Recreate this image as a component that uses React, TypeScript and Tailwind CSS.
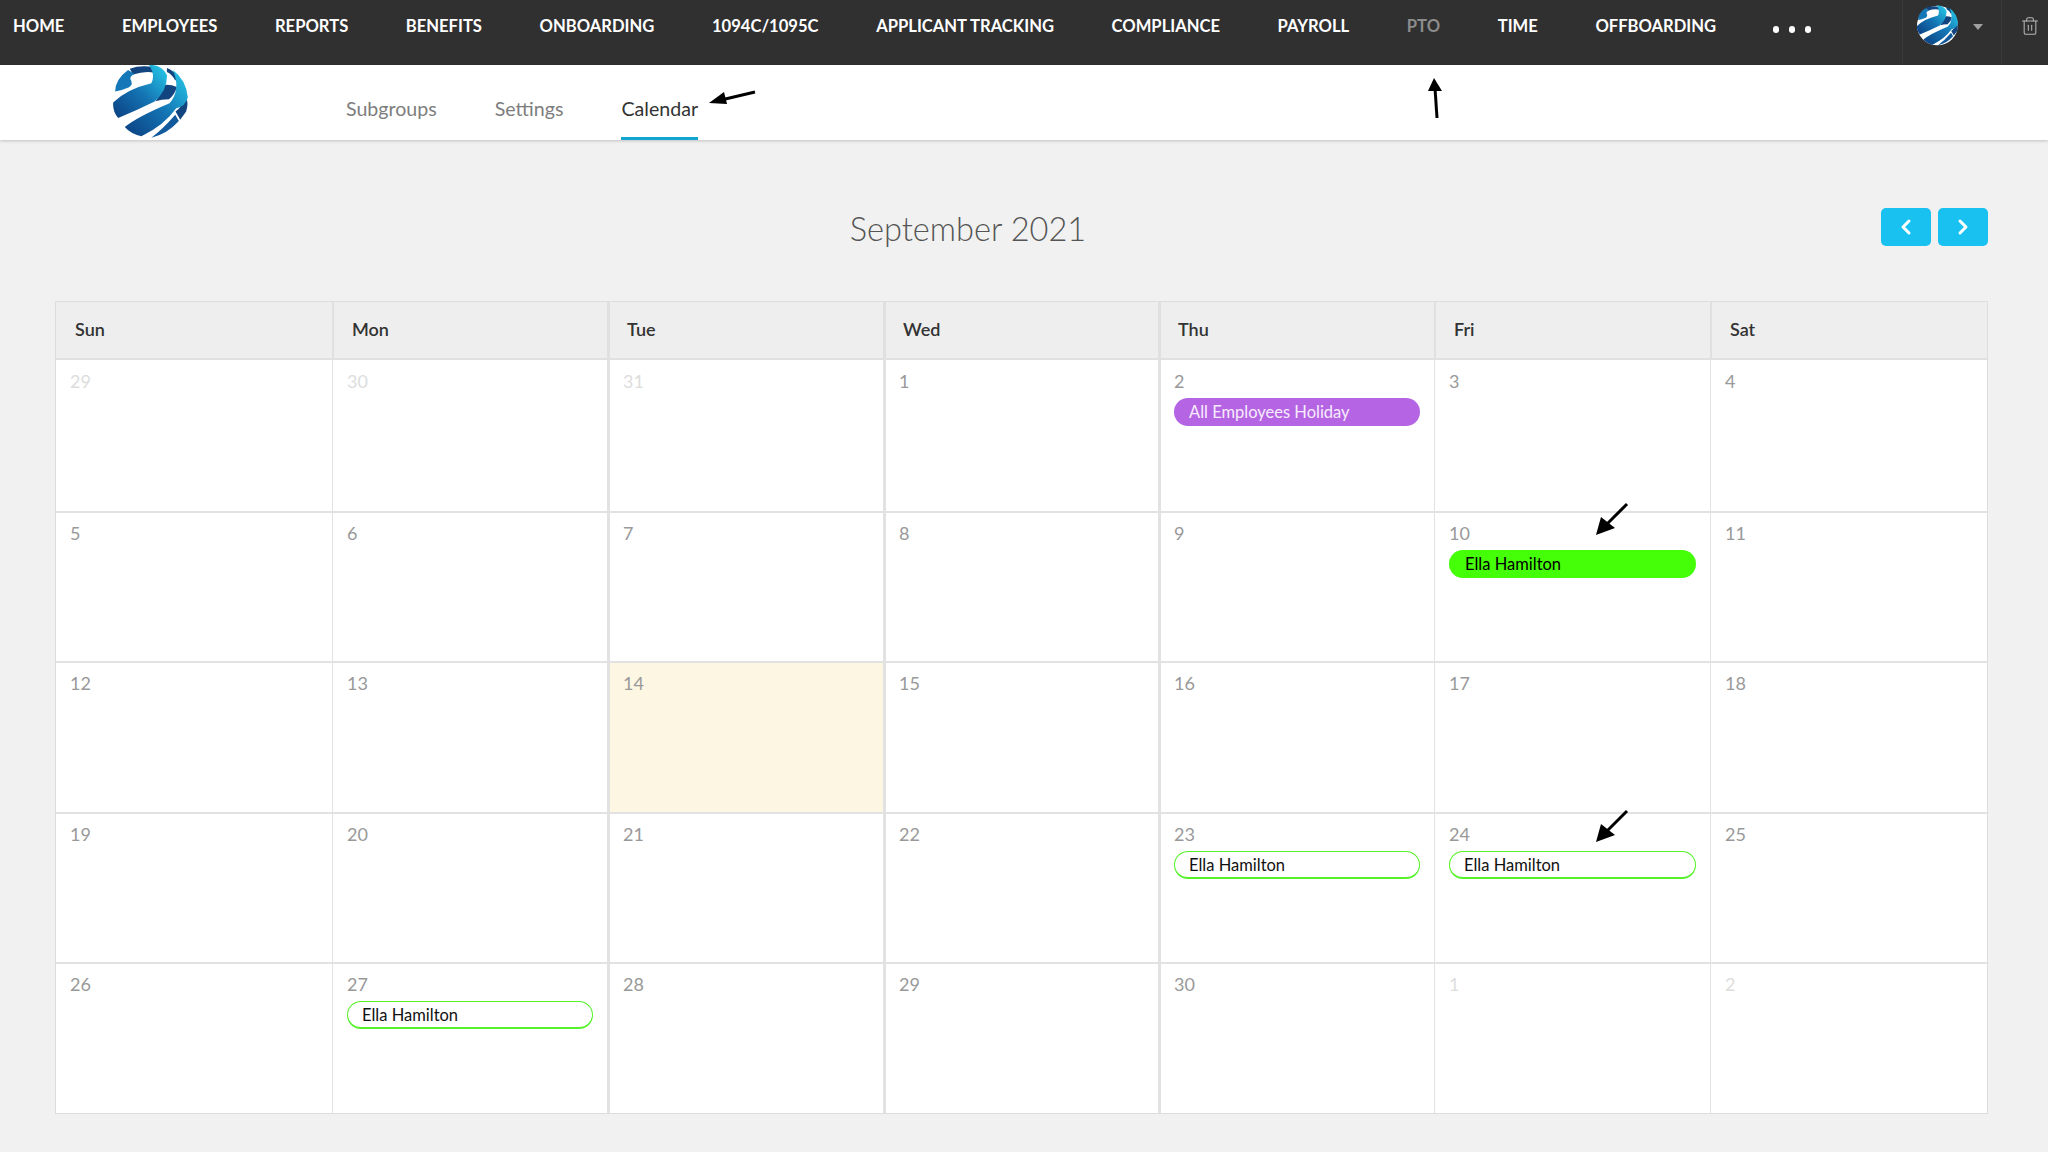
import { useId } from 'react';
import { ChevronLeft, ChevronRight, Trash2 } from 'lucide-react';

const NAV = ['HOME', 'EMPLOYEES', 'REPORTS', 'BENEFITS', 'ONBOARDING', '1094C/1095C', 'APPLICANT TRACKING', 'COMPLIANCE', 'PAYROLL', 'PTO', 'TIME', 'OFFBOARDING'];
const DAYS = ['Sun', 'Mon', 'Tue', 'Wed', 'Thu', 'Fri', 'Sat'];

type Cell = { n: number; muted?: boolean; today?: boolean; pill?: 'holiday' | 'solid' | 'outline' };

const CELLS: Cell[] = [
  { n: 29, muted: true }, { n: 30, muted: true }, { n: 31, muted: true }, { n: 1 }, { n: 2, pill: 'holiday' }, { n: 3 }, { n: 4 },
  { n: 5 }, { n: 6 }, { n: 7 }, { n: 8 }, { n: 9 }, { n: 10, pill: 'solid' }, { n: 11 },
  { n: 12 }, { n: 13 }, { n: 14, today: true }, { n: 15 }, { n: 16 }, { n: 17 }, { n: 18 },
  { n: 19 }, { n: 20 }, { n: 21 }, { n: 22 }, { n: 23, pill: 'outline' }, { n: 24, pill: 'outline' }, { n: 25 },
  { n: 26 }, { n: 27, pill: 'outline' }, { n: 28 }, { n: 29 }, { n: 30 }, { n: 1, muted: true }, { n: 2, muted: true },
];

function Globe({ className, ring }: { className: string; ring?: boolean }) {
  const id = useId();
  return (
    <svg viewBox="100 75 225 220" className={className}>
      <defs>
        <linearGradient id={id} x1="0" y1="1" x2="1" y2="0">
          <stop offset="0" stopColor="#0b3f80" />
          <stop offset="0.5" stopColor="#1474b4" />
          <stop offset="1" stopColor="#27cdea" />
        </linearGradient>
      </defs>
      <ellipse cx="212" cy="185" rx="112" ry="109" fill={ring ? '#ffffff' : 'none'} />
      <path d="M250 135 Q272 132 292 141 Q285 165 268 178 Q245 178 228 184 Q245 160 250 135Z" fill="#12457f" />
      <path d="M262 84 Q282 92 298 112 L287 122 Q277 102 262 96Z" fill="#12457f" />
      <path d="M320 172 Q328 190 320 215 L302 240 L288 215 Q308 200 320 172Z" fill="#12457f" />
      <path d="M215 294 Q262 284 298 244 L287 225 Q250 268 215 294Z" fill="#125a9c" />
      <path d="M150 86 Q185 74 222 82 L224 98 Q195 92 160 104Z" fill="#12457f" />
      <path d="M106 155 Q106 118 145 90 L165 102 Q150 108 152 118 Q162 132 148 142 Q125 152 106 155Z" fill="#1478b8" />
      <path d="M100 188 Q140 148 215 130 Q228 105 208 75 Q245 72 262 105 Q264 150 225 185 Q170 212 115 235 Q98 215 100 188Z" fill={`url(#${id})`} />
      <path d="M135 262 Q170 232 270 190 Q305 150 280 90 Q320 120 325 172 Q318 200 290 205 Q255 255 185 290 Q152 282 135 262Z" fill={`url(#${id})`} />
    </svg>
  );
}

// annotation arrow drawn over the page, tail to tip
function Arrow({ className, d, head }: { className: string; d: string; head: string }) {
  return (
    <svg viewBox="0 0 50 50" className={`absolute ${className}`}>
      <path d={d} stroke="#000" strokeWidth="3" fill="none" />
      <polygon points={head} fill="#000" />
    </svg>
  );
}

function Pill({ kind }: { kind: NonNullable<Cell['pill']> }) {
  if (kind === 'holiday') {
    return <div className="h-[28px] rounded-[14px] bg-[#b565e3] pl-[15px] text-[16.5px] leading-[29px] text-[#f7ecfd]">All Employees Holiday</div>;
  }
  if (kind === 'solid') {
    return <div className="h-[28px] rounded-[14px] bg-[#44ff08] pl-[16px] text-[16.5px] leading-[28px] text-black">Ella Hamilton</div>;
  }
  return <div className="h-[28px] rounded-[14px] border border-b-2 border-[#55f22a] bg-white pl-[14px] text-[16.5px] leading-[26px] text-[#111]">Ella Hamilton</div>;
}

export default function App() {
  return (
    <div className="relative min-h-screen overflow-hidden bg-[#f1f1f1] font-['Lato',sans-serif]">
      <nav className="flex h-[65px] items-start bg-[#303030] text-white">
        <ul className="flex gap-[57.6px] pl-[13px] pt-[15px] text-[16.6px] font-bold leading-[22px]">
          {NAV.map((item) => (
            <li key={item} className={item === 'PTO' ? 'text-[#8c8c8c]' : ''}>{item}</li>
          ))}
        </ul>
        <div className="ml-[57px] mt-[26px] flex gap-[10px]">
          <span className="h-[7px] w-[6px] rounded-full bg-white" />
          <span className="h-[7px] w-[6px] rounded-full bg-white" />
          <span className="h-[7px] w-[6px] rounded-full bg-white" />
        </div>
        <div className="ml-auto flex h-[65px]">
          <div className="flex w-[100px] items-start border-x border-[#3a3a3a] pl-[14px] pt-[5px]">
            <Globe className="h-[41px] w-[41px]" ring />
            <span className="ml-[15px] mt-[19px] h-0 w-0 border-x-[5px] border-t-[6px] border-x-transparent border-t-[#a0a0a0]" />
          </div>
          <div className="w-[46px] pl-[18px] pt-[16px]">
            <Trash2 size={20} strokeWidth={1.25} className="text-[#b5b5b5]" />
          </div>
        </div>
      </nav>

      <header className="flex h-[75px] bg-white shadow-[0_1px_3px_rgba(0,0,0,0.2)]">
        <div className="w-[346px] pl-[113px]">
          <Globe className="h-[73px] w-[75px]" />
        </div>
        <div className="flex gap-[58px] text-[19.6px] text-[#7d7d7d]">
          <span className="pt-[29px]">Subgroups</span>
          <span className="pt-[29px]">Settings</span>
          <span className="h-[75px] border-b-[3px] border-[#12a5d0] pt-[29px] text-[#333]">Calendar</span>
        </div>
      </header>

      <main className="pl-[55px] pr-[60px] pt-[68px]">
        <div className="flex h-[38px] items-center">
          <h1 className="flex-1 pt-[5px] text-center text-[32.6px] font-light text-[#555]">September 2021</h1>
          <div className="flex gap-[7px]">
            <button className="flex h-[38px] w-[50px] items-center justify-center rounded-[5px] bg-[#19c1f0] text-white">
              <ChevronLeft size={24} strokeWidth={3} />
            </button>
            <button className="flex h-[38px] w-[50px] items-center justify-center rounded-[5px] bg-[#19c1f0] text-white">
              <ChevronRight size={24} strokeWidth={3} />
            </button>
          </div>
        </div>

        <div className="mt-[55px] grid grid-cols-[276px_275px_276px_275px_276px_276px_277px] border border-[#dddddd]">
          {DAYS.map((d, i) => (
            <div key={d} className={`flex h-[58px] items-center border-b-2 bg-[#eeeeee] pb-[2px] text-[18px] font-semibold text-[#333] border-[#e0e0e0] ${i === 0 ? 'pl-[19px]' : i >= 2 && i <= 4 ? 'border-l-[3px] pl-[17px]' : 'border-l-2 pl-[18px]'}`}>
              {d}
            </div>
          ))}
          {CELLS.map((c, i) => {
            const col = i % 7;
            return (
              <div
                key={i}
                className={`h-[150.6px] border-[#e2e2e2] pr-[14px] ${i < 7 ? 'pt-[6px]' : 'border-t-2 pt-[5px]'} ${col === 0 ? 'pl-[14px]' : col >= 2 && col <= 4 ? 'border-l-[3px] pl-[13px]' : 'border-l pl-[14px]'} ${c.today ? 'bg-[#fdf6e3]' : 'bg-white'}`}
              >
                <div className={`h-[32px] text-[18px] leading-[30px] ${c.muted ? 'text-[#dddddd]' : 'text-[#999]'}`}>{c.n}</div>
                {c.pill && <Pill kind={c.pill} />}
              </div>
            );
          })}
        </div>
      </main>

      <Arrow className="left-[707px] top-[78px] h-[50px] w-[50px]" d="M48 14 L14 22" head="2,25 17,14 20,26" />
      <Arrow className="left-[1411px] top-[74px] h-[50px] w-[50px]" d="M26 44 L24 14" head="23,4 17,17 31,17" />
      <Arrow className="left-[1590px] top-[498px] h-[50px] w-[50px]" d="M37 6 L15 28" head="6,37 11,19 25,30" />
      <Arrow className="left-[1590px] top-[805px] h-[50px] w-[50px]" d="M37 6 L15 28" head="6,37 11,19 25,30" />
    </div>
  );
}
